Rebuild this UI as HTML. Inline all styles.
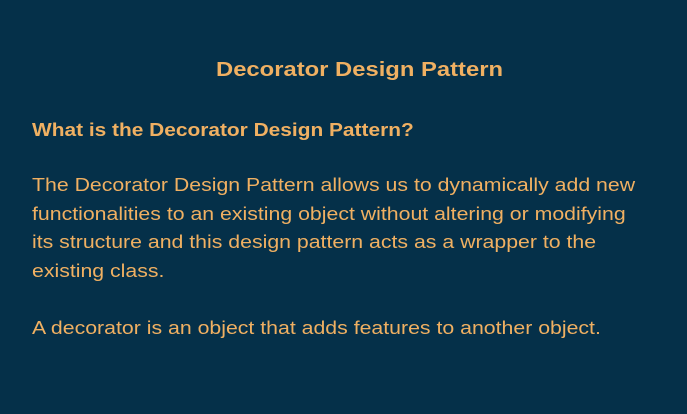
<!DOCTYPE html>
<html><head><style>
html,body{margin:0;padding:0;width:687px;height:414px;background:#053049;overflow:hidden}
body{font-family:"Liberation Sans","DejaVu Sans",sans-serif;color:#f0b062;position:relative}
.t{position:absolute;left:216px;top:59px;font-size:20px;font-weight:bold;white-space:nowrap;transform:scaleX(1.19);transform-origin:0 0}
.h{position:absolute;left:32px;top:120px;font-size:18px;font-weight:bold;white-space:nowrap;transform:scaleX(1.16);transform-origin:0 0}
.p{position:absolute;left:32px;font-size:18.5px;line-height:28.5px;white-space:nowrap;transform:scaleX(1.15);transform-origin:0 0}
</style></head><body>
<div class="t">Decorator Design Pattern</div>
<div class="h">What is the Decorator Design Pattern?</div>
<div class="p" style="top:171px">The Decorator Design Pattern allows us to dynamically add new<br>functionalities to an existing object without altering or modifying<br>its structure and this design pattern acts as a wrapper to the<br>existing class.</div>
<div class="p" style="top:314px">A decorator is an object that adds features to another object.</div>
</body></html>
